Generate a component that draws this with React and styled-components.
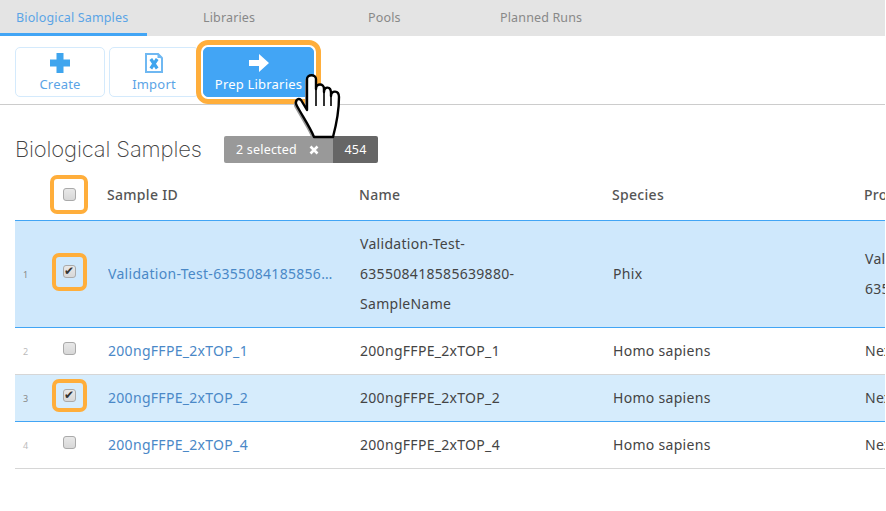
import React from 'react';
import styled, { createGlobalStyle } from 'styled-components';

const GlobalStyle = createGlobalStyle`
  html, body {
    margin: 0;
    background: #fff;
    overflow: hidden;
  }
  body {
    font-family: "Noto Sans", "Open Sans", sans-serif;
    color: #444;
  }
`;

const Page = styled.div`
  width: 885px;
  height: 511px;
  overflow: hidden;
`;

const Tabs = styled.nav`
  display: flex;
  height: 36px;
  background: #e4e4e4;
`;

const Tab = styled.div`
  box-sizing: border-box;
  width: ${(p) => p.$width}px;
  padding: 10px 0 0 ${(p) => p.$pad}px;
  font-size: 12.5px;
  letter-spacing: 0.15px;
  line-height: 16px;
  color: ${(p) => (p.$active ? '#5ba4e6' : '#888')};
  border-bottom: 3px solid ${(p) => (p.$active ? '#42a5f5' : 'transparent')};
`;

const Toolbar = styled.div`
  display: flex;
  gap: 4px;
  height: 57px;
  padding: 11px 0 0 15px;
  border-bottom: 1px solid #ccc;
`;

const ToolButton = styled.div`
  position: relative;
  box-sizing: border-box;
  display: flex;
  flex-direction: column;
  align-items: center;
  width: ${(p) => p.$width}px;
  height: 50px;
  padding-top: 3px;
  border: 1px solid ${(p) => (p.$primary ? '#42a5f5' : '#d4eafc')};
  border-radius: 5px;
  background: ${(p) => (p.$primary ? '#42a5f5' : '#fff')};
  color: ${(p) => (p.$primary ? '#fff' : '#5ba4e6')};
  font-size: 13px;
  letter-spacing: 0.2px;
  line-height: 16px;
  ${(p) => p.$primary && 'outline: 5px solid #ffae3b; outline-offset: 2px;'}
`;

const ToolIcon = styled.svg`
  display: block;
  width: 24px;
  height: 24px;
  margin-bottom: 1px;
`;

const Hand = styled.svg`
  position: absolute;
  left: 88px;
  top: 24px;
  width: 52px;
  height: 70px;
`;

const TitleRow = styled.div`
  display: flex;
  align-items: center;
  height: 27px;
  margin: 31px 0 0 15px;
`;

const Title = styled.h1`
  width: 209px;
  margin: -2px 0 0;
  font-family: "Inter", sans-serif;
  font-size: 22px;
  font-weight: 200;
  letter-spacing: -0.15px;
  color: #444;
`;

const Badge = styled.div`
  display: flex;
  height: 27px;
  font-size: 12.5px;
  letter-spacing: 0.2px;
  line-height: 27px;
  color: #fff;
  border-radius: 2px;
  overflow: hidden;
`;

const BadgeLabel = styled.div`
  display: flex;
  align-items: center;
  gap: 12px;
  width: 109px;
  padding-left: 12px;
  box-sizing: border-box;
  background: #999;
`;

const BadgeCount = styled.div`
  width: 45px;
  text-align: center;
  background: #666;
`;

const Close = styled.svg`
  width: 10px;
  height: 10px;
`;

const TableWrap = styled.div`
  margin: 9px 0 0 15px;
  width: 870px;
  overflow: hidden;
`;

const Table = styled.table`
  width: 1200px;
  table-layout: fixed;
  border-collapse: collapse;
  font-size: 14px;
  letter-spacing: 0.3px;
`;

const Head = styled.th`
  height: 44px;
  padding: 0 0 4px ${(p) => (p.$flush ? 0 : 14)}px;
  text-align: left;
  font-weight: 500;
  color: #555;
  white-space: nowrap;
  overflow: hidden;
`;

const Row = styled.tr`
  background: ${(p) => p.$bg || '#fff'};
  border-top: 1px solid ${(p) => (p.$selected ? '#42a5f5' : 'transparent')};
  border-bottom: 1px solid ${(p) => (p.$selected ? '#42a5f5' : '#d6d6d6')};
`;

const Cell = styled.td`
  padding: 8px 8px 8px 15px;
  line-height: 30px;
  color: #444;
  overflow: hidden;
`;

const IndexCell = styled.td`
  padding: 0 0 0 8px;
  font-size: 9px;
  color: ${(p) => (p.$selected ? '#888' : '#bbb')};
`;

const CheckCell = styled.td`
  padding: 0 0 5px;
`;

const CheckFrame = styled.div`
  display: flex;
  align-items: center;
  justify-content: center;
  box-sizing: border-box;
  width: ${(p) => p.$width}px;
  height: ${(p) => p.$height}px;
  margin-left: ${(p) => p.$left}px;
  border: 4px solid ${(p) => (p.$on ? '#ffae3b' : 'transparent')};
  border-radius: 7px;
`;

const Check = styled.input`
  appearance: none;
  position: relative;
  box-sizing: border-box;
  width: 13px;
  height: 13px;
  margin: 0;
  border: 1px solid #aaa;
  border-radius: 3px;
  background: linear-gradient(#e8e8e8, #d8d8d8);

  &:checked::after {
    content: '✔';
    position: absolute;
    left: 0;
    top: -2px;
    font: bold 12px/14px "DejaVu Sans", sans-serif;
    color: #333;
  }
`;

const SampleLink = styled.a`
  display: block;
  color: #4a88c7;
  white-space: nowrap;
  overflow: hidden;
  text-overflow: ellipsis;
`;

const HandDrawing = () => {
  const outline =
    'M15 38V7C15 2 24 2 24 7V17C24 11 32 11 32 17V20C32 14 39 14 39 21V24C39 18 47 18 47 25C47 35 45 50 41 65H22C18 55 11 45 5 34C2 29 6 25 9 28L15 38Z';
  return (
    <Hand viewBox="0 0 52 70">
      <path d={outline} fill="#999" transform="translate(-2 2)" />
      <path d={outline} fill="#fff" stroke="#000" strokeWidth="2.4" strokeLinejoin="round" />
      <path d="M24 17V34M32 20V34M39 24V34" stroke="#000" strokeWidth="1.6" />
    </Hand>
  );
};

const rows = [
  {
    n: 1,
    id: 'Validation-Test-635508418585639880-SampleName',
    name: ['Validation-Test-', '635508418585639880-', 'SampleName'],
    species: 'Phix',
    project: ['Validation-Test-', '635508418585639880'],
    selected: true,
    bg: '#cfe8fc',
    frame: 38,
  },
  { n: 2, id: '200ngFFPE_2xTOP_1', name: ['200ngFFPE_2xTOP_1'], species: 'Homo sapiens', project: ['Nextera'] },
  { n: 3, id: '200ngFFPE_2xTOP_2', name: ['200ngFFPE_2xTOP_2'], species: 'Homo sapiens', project: ['Nextera'], selected: true, bg: '#d6ecfc', frame: 33 },
  { n: 4, id: '200ngFFPE_2xTOP_4', name: ['200ngFFPE_2xTOP_4'], species: 'Homo sapiens', project: ['Nextera'] },
];

const Lines = ({ items }) => items.map((t) => <div key={t}>{t}</div>);

export default function App() {
  return (
    <Page>
      <GlobalStyle />
      <Tabs>
        <Tab $active $width={147} $pad={16}>Biological Samples</Tab>
        <Tab $width={165} $pad={56}>Libraries</Tab>
        <Tab $width={132} $pad={56}>Pools</Tab>
        <Tab $width={200} $pad={56}>Planned Runs</Tab>
      </Tabs>
      <Toolbar>
        <ToolButton $width={90}>
          <ToolIcon viewBox="0 0 24 24">
            <path d="M8.500 2h7v6.500H22v7h-6.500V22h-7v-6.500H2v-7h6.500z" fill="#3fa5ee" />
          </ToolIcon>
          Create
        </ToolButton>
        <ToolButton $width={90}>
          <ToolIcon viewBox="0 0 24 24">
            <path d="M3 2h13.500L21 6.500V22H3z" fill="#6fb8f2" />
            <path d="M5 4h10.500l3.500 3.500V20H5z" fill="#fff" />
            <path d="M15.500 2v5h5z" fill="#6fb8f2" />
            <path d="M8.800 8l6.400 9.500M15.200 8l-6.400 9.500" stroke="#3fa5ee" strokeWidth="3.200" />
          </ToolIcon>
          Import
        </ToolButton>
        <ToolButton $primary $width={111}>
          <ToolIcon viewBox="0 0 24 24">
            <path d="M2 9h10V3l10 9-10 9v-6H2z" fill="#fff" />
          </ToolIcon>
          Prep Libraries
          <HandDrawing />
        </ToolButton>
      </Toolbar>
      <TitleRow>
        <Title>Biological Samples</Title>
        <Badge>
          <BadgeLabel>
            2 selected
            <Close viewBox="0 0 10 10">
              <path d="M1.500 1.500l7 7M8.500 1.500l-7 7" stroke="#fff" strokeWidth="2.600" />
            </Close>
          </BadgeLabel>
          <BadgeCount>454</BadgeCount>
        </Badge>
      </TitleRow>
      <TableWrap>
        <Table>
          <colgroup>
            <col width="30" />
            <col width="48" />
            <col width="252" />
            <col width="253" />
            <col width="252" />
            <col width="365" />
          </colgroup>
          <thead>
            <tr>
              <Head $flush />
              <Head $flush>
                <CheckFrame $on $width={38} $height={39} $left={5}>
                  <Check type="checkbox" readOnly />
                </CheckFrame>
              </Head>
              <Head>Sample ID</Head>
              <Head>Name</Head>
              <Head>Species</Head>
              <Head>Project</Head>
            </tr>
          </thead>
          <tbody>
            {rows.map((r) => (
              <Row key={r.n} $selected={r.selected} $bg={r.bg}>
                <IndexCell $selected={r.selected}>{r.n}</IndexCell>
                <CheckCell>
                  <CheckFrame $on={r.selected} $width={35} $height={r.frame || 33} $left={7}>
                    <Check type="checkbox" readOnly checked={!!r.selected} />
                  </CheckFrame>
                </CheckCell>
                <Cell><SampleLink>{r.id}</SampleLink></Cell>
                <Cell><Lines items={r.name} /></Cell>
                <Cell>{r.species}</Cell>
                <Cell><Lines items={r.project} /></Cell>
              </Row>
            ))}
          </tbody>
        </Table>
      </TableWrap>
    </Page>
  );
}
